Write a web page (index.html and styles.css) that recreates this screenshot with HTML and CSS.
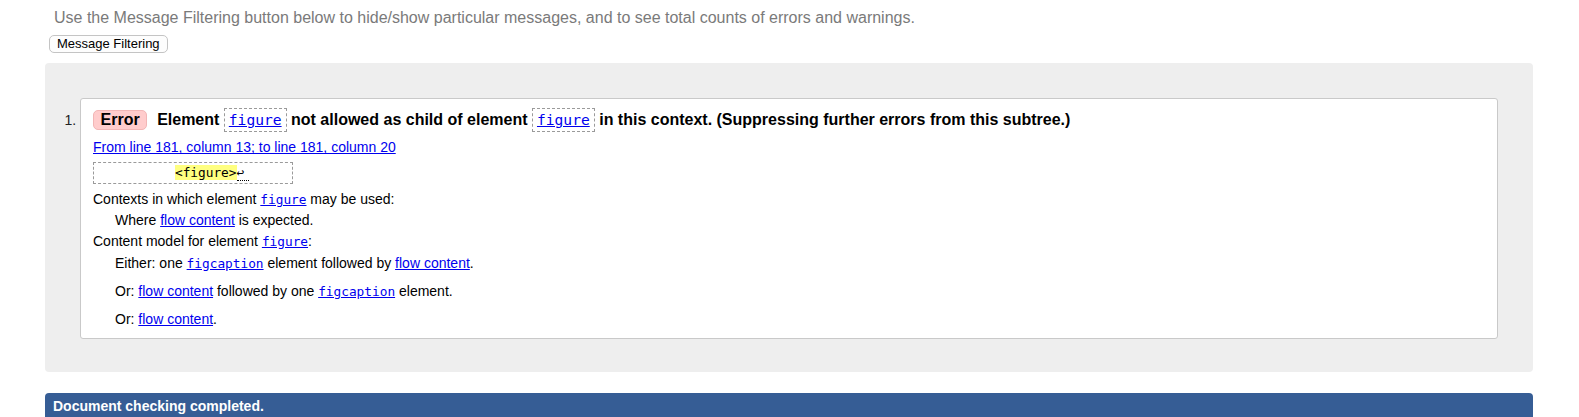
FILE: index.html
```html
<!DOCTYPE html>
<html lang="en">
<head>
<meta charset="utf-8">
<title>Validation output</title>
<link rel="stylesheet" href="styles.css">
</head>
<body>
<p class="intro">Use the Message Filtering button below to hide/show particular messages, and to see total counts of errors and warnings.</p>
<div class="filter"><button class="filter-btn" type="button">Message Filtering</button></div>
<div class="results">
  <ol class="messages">
    <li class="msg">
      <p class="msg-head"><strong class="badge">Error</strong><span class="msg-text">Element <code class="name"><a href="#">figure</a></code> not allowed as child of element <code class="name"><a href="#">figure</a></code> in this context. (Suppressing further errors from this subtree.)</span></p>
      <p class="location"><a href="#">From line 181, column 13; to line 181, column 20</a></p>
      <div class="extract"><code>          <b class="hl">&lt;figure&gt;</b><span class="lf">↩</span>     </code></div>
      <dl class="details">
        <dt>Contexts in which element <a href="#"><code>figure</code></a> may be used:</dt>
        <dd>Where <a href="#">flow content</a> is expected.</dd>
        <dt>Content model for element <a href="#"><code>figure</code></a>:</dt>
        <dd class="model">
          <p>Either: one <a href="#"><code>figcaption</code></a> element followed by <a href="#">flow content</a>.</p>
          <p>Or: <a href="#">flow content</a> followed by one <a href="#"><code>figcaption</code></a> element.</p>
          <p>Or: <a href="#">flow content</a>.</p>
        </dd>
      </dl>
    </li>
  </ol>
</div>
<div class="status">Document checking completed.</div>
</body>
</html>
```
FILE: styles.css
```css
html, body {
  margin: 0;
  padding: 0;
  background: #fff;
}
body {
  font-family: "Liberation Sans", Arial, sans-serif;
  color: #000;
  font-size: 14px;
}
a {
  color: #0000ee;
  text-decoration: underline;
}
code {
  font-family: "DejaVu Sans Mono", "Liberation Mono", monospace;
  font-size: 0.914em;
}

.intro {
  margin: 0;
  padding: 8.5px 0 0 54px;
  font-size: 16px;
  line-height: 18px;
  color: #7a7a7a;
}
.filter {
  padding: 8.5px 0 0 49px;
}
.filter-btn {
  display: block;
  margin: 0;
  padding: 0 7px;
  height: 18px;
  font-family: "Liberation Sans", Arial, sans-serif;
  font-size: 13px;
  line-height: 16px;
  color: #000;
  background: #fdfdfd;
  border: 1px solid #c4c4c4;
  border-radius: 5px;
}

.results {
  margin: 10px 46px 0 45px;
  padding: 35px 35px 33px 35px;
  background: #eeeeee;
  border-radius: 4px;
}
.messages {
  margin: 0;
  padding: 0;
  list-style: decimal outside;
}
.msg {
  background: #fff;
  border: 1px solid #c9c9c9;
  border-radius: 3px;
  padding: 6.5px 12px 8.3px 12px;
  font-size: 14px;
  line-height: 21px;
}
.msg::marker {
  font-size: 14px;
  color: #222;
}
.msg-head {
  margin: 0;
  font-size: 16px;
  line-height: 28px;
  font-weight: bold;
}
.badge {
  display: inline-block;
  padding: 0 6.5px;
  margin-right: 10px;
  line-height: 18px;
  background: #ffcccc;
  border: 1px solid #f2b6b6;
  border-radius: 5px;
}
.msg-text code.name {
  display: inline-block;
  padding: 0 4px;
  line-height: 22px;
  font-weight: normal;
  border: 1px dashed #9a9a9a;
}
.location {
  margin: 3.9px 0 0;
}
.extract {
  margin-top: 3.7px;
  width: fit-content;
  border: 1px dashed #9a9a9a;
  line-height: 20px;
}
.extract code {
  display: block;
  white-space: pre;
  padding: 0 4px 0 4px;
  color: #000;
}
.hl {
  font-weight: normal;
  background: #ffff80;
}
.lf {
  border-bottom: 1px dotted #000;
  padding-right: 5px;
}
.details {
  margin: 5px 0 0;
}
.details dt {
  margin: 0;
}
.details dd {
  margin: 0 0 0 22px;
}
.model p {
  margin: 7px 0 0;
}
.model p:first-child {
  margin-top: 0.5px;
}

.status {
  margin: 21px 46px 0 45px;
  padding: 3px 8px 6px;
  line-height: 21px;
  background: #365d95;
  color: #fff;
  font-weight: bold;
  font-size: 14px;
  border-radius: 4px 4px 0 0;
}
```
